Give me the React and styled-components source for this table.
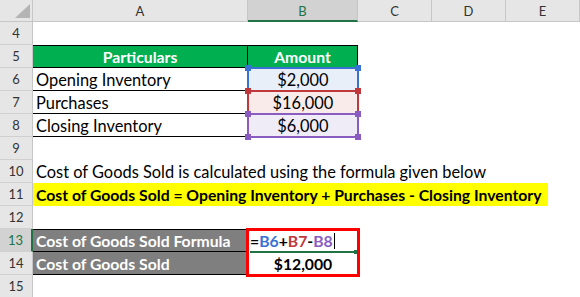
import React from "react";
import styled, { createGlobalStyle } from "styled-components";

const Global = createGlobalStyle`
  html, body { margin: 0; padding: 0; background: #fff; }
  body { width: 580px; height: 297px; overflow: hidden; font-family: "Lato", "Liberation Sans", sans-serif; }
`;

const Sheet = styled.div`
  display: grid;
  grid-template-columns: 33px 215px 110px 74px 74px 74px;
  grid-template-rows: 22px repeat(12, 23px);
  width: 580px;
  height: 297px;
  overflow: hidden;
  background: #fff;
`;

const Corner = styled.div`
  position: relative;
  background: #e6e6e6;
  border-right: 1px solid #c6c6c6;
  border-bottom: 1px solid #c6c6c6;
  box-sizing: border-box;
`;

const CornerMark = styled.svg`
  position: absolute;
  left: 15px;
  top: 4px;
`;

const ColHead = styled.div`
  display: flex;
  align-items: center;
  justify-content: center;
  box-sizing: border-box;
  background: ${(p) => (p.$active ? "#d2d2d2" : "#e6e6e6")};
  border-right: 1px solid #c6c6c6;
  border-bottom: ${(p) => (p.$active ? "2px solid #217346" : "1px solid #c6c6c6")};
  color: ${(p) => (p.$active ? "#217346" : "#333")};
  font-size: 13px;
  padding-top: ${(p) => (p.$active ? "1px" : "0")};
`;

const RowHead = styled.div`
  display: flex;
  align-items: center;
  justify-content: center;
  box-sizing: border-box;
  background: ${(p) => (p.$active ? "#d2d2d2" : "#e6e6e6")};
  border-right: ${(p) => (p.$active ? "2px solid #217346" : "1px solid #c6c6c6")};
  border-bottom: 1px solid #d0d0d0;
  color: ${(p) => (p.$active ? "#217346" : "#333")};
  font-size: 13px;
`;

const REG = "16.4px";
const BOLD = "15.75px";

const Cell = styled.div`
  position: relative;
  display: flex;
  align-items: center;
  justify-content: ${(p) => (p.$align === "center" ? "center" : "flex-start")};
  box-sizing: border-box;
  padding: 0 3px;
  background: ${(p) => p.$bg || "#fff"};
  color: ${(p) => p.$color || "#000"};
  font-weight: ${(p) => (p.$bold ? 700 : 400)};
  font-size: ${(p) => (p.$bold ? BOLD : REG)};
  white-space: nowrap;
  border-top: ${(p) => (p.$bt ? "1px solid #000" : "none")};
  border-bottom: ${(p) => (p.$bb ? "1px solid #000" : "none")};
  border-right: ${(p) => (p.$br ? "1px solid #000" : "none")};
  grid-column: ${(p) => p.$span || "auto"};
`;

const Highlight = styled.div`
  display: flex;
  align-items: center;
  grid-column: 2 / -1;
  justify-self: start;
  background: #ffff00;
  padding: 0 6px 0 3px;
  font-size: ${BOLD};
  font-weight: 700;
  color: #000;
  white-space: nowrap;
`;

const RefBox = styled.div`
  position: absolute;
  inset: -1px -1px -1px -1px;
  border: 2px solid ${(p) => p.$c};
  pointer-events: none;
  z-index: 2;
`;

const Handle = styled.span`
  position: absolute;
  width: 6px;
  height: 6px;
  background: ${(p) => p.$c};
  ${(p) => (p.$top ? "top: -4px;" : "bottom: -4px;")}
  ${(p) => (p.$left ? "left: -4px;" : "right: -4px;")}
`;

const Selection = styled.div`
  position: relative;
  grid-row: span 2;
  display: grid;
  grid-template-rows: 23px 23px;
`;

const RedFrame = styled.div`
  position: absolute;
  left: -2px;
  top: -1px;
  right: -2px;
  bottom: -2px;
  border: 3px solid #ff0000;
  z-index: 3;
  pointer-events: none;
`;

const EditCell = styled.div`
  position: relative;
  display: flex;
  align-items: center;
  padding: 0 2px;
  font-size: ${BOLD};
  font-weight: 700;
  white-space: nowrap;
`;

const EditLine = styled.div`
  position: absolute;
  left: 2px;
  right: 3px;
  bottom: -1px;
  height: 2px;
  background: #217346;
  &::after {
    content: "";
    position: absolute;
    right: -3px;
    top: -1px;
    width: 4px;
    height: 4px;
    background: #217346;
  }
`;

const Ref = styled.span`
  color: ${(p) => p.$c};
`;

const Caret = styled.span`
  display: inline-block;
  width: 1px;
  height: 16px;
  background: #000;
  margin-left: 1px;
`;

const ResultCell = styled.div`
  display: flex;
  align-items: center;
  justify-content: center;
  font-size: ${BOLD};
  font-weight: 700;
`;

const BLUE = "#3a72d4";
const RED = "#c0383c";
const PURPLE = "#8a5cc2";

const cols = ["A", "B", "C", "D", "E"];

const Empty = () => (
  <>
    <Cell />
    <Cell />
    <Cell />
    <Cell />
  </>
);

export default function App() {
  return (
    <>
      <Global />
      <Sheet>
        <Corner>
          <CornerMark width="15" height="14" viewBox="0 0 15 14">
            <polygon points="0,14 15,14 15,0" fill="#b4b4b4" />
          </CornerMark>
        </Corner>
        {cols.map((c) => (
          <ColHead key={c} $active={c === "B"}>{c}</ColHead>
        ))}

        <RowHead>4</RowHead>
        <Cell />
        <Empty />

        <RowHead>5</RowHead>
        <Cell $bg="#00b050" $color="#fff" $bold $align="center" $bt $bb $br>Particulars</Cell>
        <Cell $bg="#00b050" $color="#fff" $bold $align="center" $bt $bb $br>Amount</Cell>
        <Cell />
        <Cell />
        <Cell />

        <RowHead>6</RowHead>
        <Cell $bb $br>Opening Inventory</Cell>
        <Cell $bg="#e8eff9" $align="center">
          $2,000
          <RefBox $c={BLUE}>
            <Handle $c={BLUE} $top $left />
            <Handle $c={BLUE} $top />
          </RefBox>
        </Cell>
        <Cell />
        <Cell />
        <Cell />

        <RowHead>7</RowHead>
        <Cell $bb $br>Purchases</Cell>
        <Cell $bg="#f9ebea" $align="center">
          $16,000
          <RefBox $c={RED}>
            <Handle $c={RED} $top $left />
            <Handle $c={RED} $top />
          </RefBox>
        </Cell>
        <Cell />
        <Cell />
        <Cell />

        <RowHead>8</RowHead>
        <Cell $bb $br>Closing Inventory</Cell>
        <Cell $bg="#efebf7" $align="center">
          $6,000
          <RefBox $c={PURPLE}>
            <Handle $c={PURPLE} $top $left />
            <Handle $c={PURPLE} $top />
            <Handle $c={PURPLE} $left />
            <Handle $c={PURPLE} />
          </RefBox>
        </Cell>
        <Cell />
        <Cell />
        <Cell />

        <RowHead>9</RowHead>
        <Cell />
        <Empty />

        <RowHead>10</RowHead>
        <Cell $span="2 / -1">Cost of Goods Sold is calculated using the formula given below</Cell>

        <RowHead>11</RowHead>
        <Highlight>Cost of Goods Sold = Opening Inventory + Purchases - Closing Inventory</Highlight>

        <RowHead>12</RowHead>
        <Cell />
        <Empty />

        <RowHead $active>13</RowHead>
        <Cell $bg="#7f7f7f" $color="#fff" $bold $bt $bb $br>Cost of Goods Sold Formula</Cell>
        <Selection>
          <EditCell>
            =<Ref $c={BLUE}>B6</Ref>+<Ref $c={RED}>B7</Ref>-<Ref $c={PURPLE}>B8</Ref>
            <Caret />
            <EditLine />
          </EditCell>
          <ResultCell>$12,000</ResultCell>
          <RedFrame />
        </Selection>
        <Cell />
        <Cell />
        <Cell />

        <RowHead>14</RowHead>
        <Cell $bg="#7f7f7f" $color="#fff" $bold $bb $br>Cost of Goods Sold</Cell>
        <Cell />
        <Cell />
        <Cell />

        <RowHead>15</RowHead>
        <Cell />
        <Empty />
      </Sheet>
    </>
  );
}
